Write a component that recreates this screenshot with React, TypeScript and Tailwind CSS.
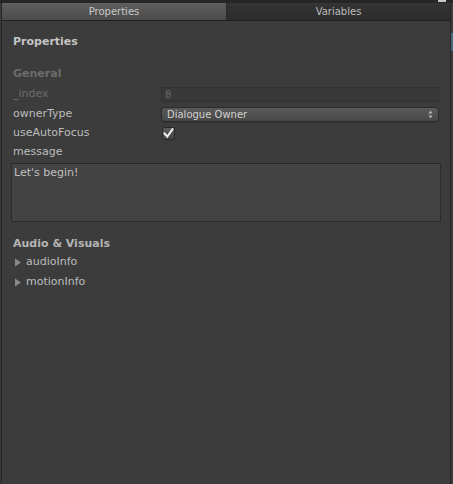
import React from "react";

function Row({ label, dim, h, children }: { label: string; dim?: boolean; h: string; children?: React.ReactNode }) {
  return (
    <div className={`flex items-center ${h}`}>
      <div className={`w-[148px] shrink-0 text-[11px] ${dim ? "text-[#6c6c6c]" : "text-[#bcbcbc]"}`}>{label}</div>
      {children}
    </div>
  );
}

function Foldout({ label }: { label: string }) {
  return (
    <div className="flex items-center h-[20px]">
      <svg width="8" height="9" viewBox="0 0 8 9" className="ml-[1px] mr-[4px]">
        <path d="M1 0.5 L7 4.5 L1 8.5 Z" fill="#8a8a8a" />
      </svg>
      <span className="text-[11px] text-[#bcbcbc]">{label}</span>
    </div>
  );
}

export default function App() {
  return (
    <div className="w-[453px] h-[484px] bg-[#3c3c3c] flex flex-col overflow-hidden relative" style={{ fontFamily: "'DejaVu Sans', sans-serif" }}>
      <div className="h-[3px] bg-[#262626] shrink-0 relative">
        <div className="absolute left-[438px] top-0 w-[8px] h-[2px] bg-[#c8c8c8]" />
      </div>
      <div className="flex flex-1 min-h-0">
        <div className="w-[1px] bg-[#3a3a3a]" />
        <div className="w-[1px] bg-[#262626]" />
        <div className="flex-1 flex flex-col min-w-0">
          <div className="flex h-[18px] shrink-0 border-b border-[#1f1f1f]">
            <div className="w-[225px] bg-gradient-to-b from-[#5e5e5e] to-[#4b4b4b] flex items-center justify-center text-[10px] text-[#c8c8c8] border-r border-[#2a2a2a]">
              Properties
            </div>
            <div className="flex-1 bg-gradient-to-b from-[#343434] to-[#2c2c2c] flex items-center justify-center text-[10px] text-[#bdbdbd]">
              Variables
            </div>
          </div>
          <div className="flex-1 px-[11px] pt-[14px]">
            <div className="h-[14px] flex items-center text-[11px] font-bold text-[#c4c4c4]">Properties</div>
            <div className="mt-[15px] h-[20px] flex items-center text-[11px] font-bold text-[#6c6c6c]">General</div>
            <Row label="_index" dim h="h-[20px]">
              <div className="w-[280px] h-[15px] bg-[#393939] border border-[#323232] flex items-center px-[3px] text-[10px] text-[#6a6a6a]">8</div>
            </Row>
            <Row label="ownerType" h="h-[20px]">
              <div className="w-[279px] h-[15px] rounded-[3px] bg-gradient-to-b from-[#5a5a5a] to-[#474747] border border-[#2b2b2b] flex items-center justify-between px-[5px] text-[10px] text-[#d0d0d0] shadow-[0_1px_0_#333]">
                <span>Dialogue Owner</span>
                <svg width="5" height="9" viewBox="0 0 5 9">
                  <path d="M2.5 0.5 L4.5 3.5 L0.5 3.5 Z" fill="#b5b5b5" />
                  <path d="M2.5 8.5 L4.5 5.5 L0.5 5.5 Z" fill="#b5b5b5" />
                </svg>
              </div>
            </Row>
            <Row label="useAutoFocus" h="h-[19px]">
              <div className="w-[13px] h-[13px] ml-[1px] rounded-[2px] bg-gradient-to-b from-[#5a5a5a] to-[#454545] border border-[#2a2a2a] flex items-center justify-center">
                <svg width="11" height="11" viewBox="0 0 11 11">
                  <path d="M1.5 5.5 L4.3 8.6 L9.5 1.2" stroke="#f0f0f0" strokeWidth="2" fill="none" strokeLinecap="square" />
                </svg>
              </div>
            </Row>
            <Row label="message" h="h-[18px]" />
            <div className="mt-[2px] -mx-[2px] h-[59px] bg-[#434343] border border-[#2c2c2c] border-t-[#262626] px-[2px] pt-[1px] text-[11px] text-[#c0c0c0]">
              Let's begin!
            </div>
            <div className="mt-[15px] h-[14px] flex items-center text-[11px] font-bold text-[#b4b4b4]">Audio &amp; Visuals</div>
            <div className="mt-[1px]">
              <Foldout label="audioInfo" />
              <Foldout label="motionInfo" />
            </div>
          </div>
        </div>
        <div className="w-[1px] bg-[#262626]" />
        <div className="w-[2px] bg-[#3a3a3a] flex flex-col">
          <div className="h-[30px]" />
          <div className="h-[18px] bg-[#4a6580]" />
        </div>
      </div>
    </div>
  );
}
